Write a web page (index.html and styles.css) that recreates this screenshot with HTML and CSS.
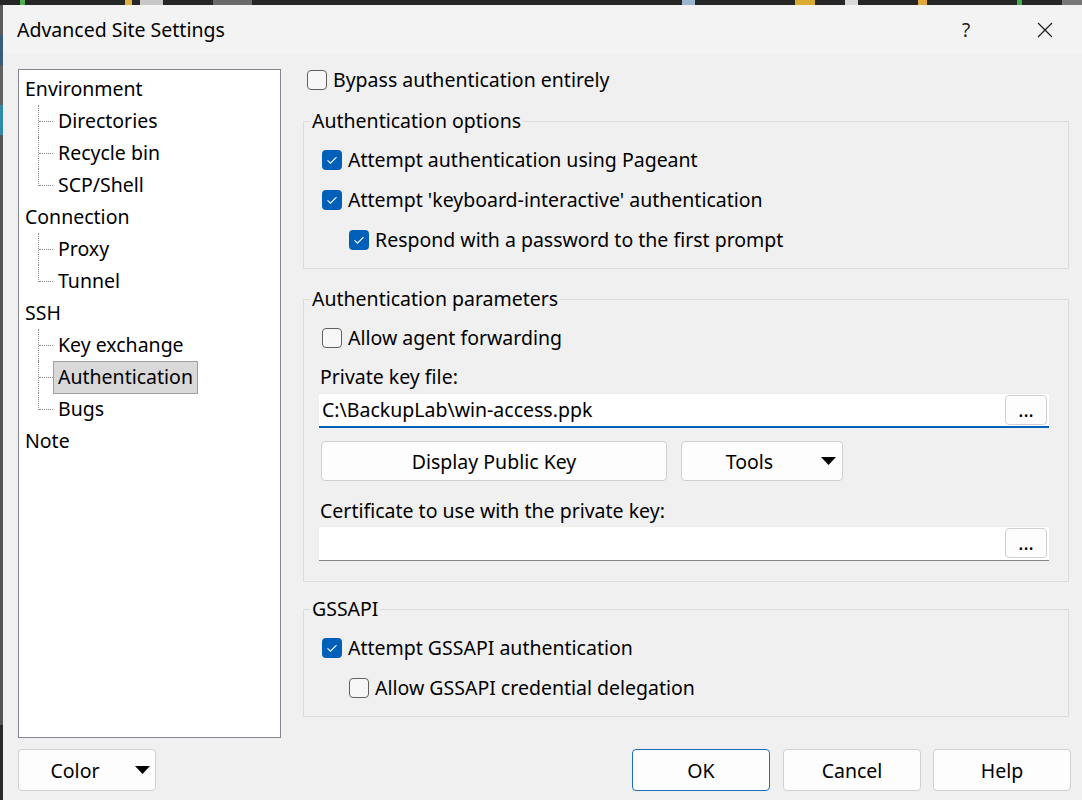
FILE: index.html
```html
<!DOCTYPE html>
<html lang="en">
<head>
<meta charset="utf-8">
<title>Advanced Site Settings</title>
<link rel="stylesheet" href="styles.css">
</head>
<body>
<div class="screen">
  <div class="topstrip">
    <span class="ts ts-g1"></span><span class="ts ts-y1"></span><span class="ts ts-w1"></span><span class="ts ts-gr1"></span>
    <span class="ts ts-b1"></span><span class="ts ts-y2"></span><span class="ts ts-w2"></span><span class="ts ts-y3"></span><span class="ts ts-g2"></span><span class="ts ts-gr2"></span>
  </div>
  <div class="row">
    <div class="leftstrip"></div>
    <div class="dialog">
      <div class="titlebar">
        <span class="title">Advanced Site Settings</span>
        <span class="help">?</span>
        <span class="close"><svg width="16" height="16" viewBox="0 0 16 16"><path d="M1 1 L15 15 M15 1 L1 15" stroke="#1b1b1b" stroke-width="1.2" fill="none"/></svg></span>
      </div>
      <div class="body">
        <div class="main">
          <div class="tree">
            <div class="node">Environment</div>
            <div class="kids">
              <div class="kid"><span>Directories</span></div>
              <div class="kid"><span>Recycle bin</span></div>
              <div class="kid"><span>SCP/Shell</span></div>
            </div>
            <div class="node">Connection</div>
            <div class="kids">
              <div class="kid"><span>Proxy</span></div>
              <div class="kid"><span>Tunnel</span></div>
            </div>
            <div class="node">SSH</div>
            <div class="kids">
              <div class="kid"><span>Key exchange</span></div>
              <div class="kid"><span class="sel">Authentication</span></div>
              <div class="kid"><span>Bugs</span></div>
            </div>
            <div class="node">Note</div>
          </div>

          <div class="pane">
            <label class="cb bypass"><span class="box off"></span>Bypass authentication entirely</label>

            <fieldset class="grp g1">
              <legend>Authentication options</legend>
              <label class="cb"><svg class="box" width="20" height="20" viewBox="0 0 20 20"><rect width="20" height="20" rx="4" fill="#005fb8"/><path d="M5.5 10.3 L8.5 13.2 L14.5 7.2" fill="none" stroke="#fff" stroke-width="1.1"/></svg>Attempt authentication using Pageant</label>
              <label class="cb"><svg class="box" width="20" height="20" viewBox="0 0 20 20"><rect width="20" height="20" rx="4" fill="#005fb8"/><path d="M5.5 10.3 L8.5 13.2 L14.5 7.2" fill="none" stroke="#fff" stroke-width="1.1"/></svg>Attempt 'keyboard-interactive' authentication</label>
              <label class="cb sub"><svg class="box" width="20" height="20" viewBox="0 0 20 20"><rect width="20" height="20" rx="4" fill="#005fb8"/><path d="M5.5 10.3 L8.5 13.2 L14.5 7.2" fill="none" stroke="#fff" stroke-width="1.1"/></svg>Respond with a password to the first prompt</label>
            </fieldset>

            <fieldset class="grp g2">
              <legend>Authentication parameters</legend>
              <label class="cb"><span class="box off"></span>Allow agent forwarding</label>
              <div class="lbl">Private key file:</div>
              <div class="field focus"><span class="val">C:\BackupLab\win-access.ppk</span><span class="btn dots">...</span></div>
              <div class="btnrow">
                <button class="btn pubkey">Display Public Key</button>
                <button class="btn dd tools"><span class="dd-label">Tools</span><svg width="15" height="8" viewBox="0 0 15 8"><path d="M0 0 H15 L7.5 8 Z" fill="#000"/></svg></button>
              </div>
              <div class="lbl lbl2">Certificate to use with the private key:</div>
              <div class="field"><span class="val"></span><span class="btn dots">...</span></div>
            </fieldset>

            <fieldset class="grp g3">
              <legend>GSSAPI</legend>
              <label class="cb"><svg class="box" width="20" height="20" viewBox="0 0 20 20"><rect width="20" height="20" rx="4" fill="#005fb8"/><path d="M5.5 10.3 L8.5 13.2 L14.5 7.2" fill="none" stroke="#fff" stroke-width="1.1"/></svg>Attempt GSSAPI authentication</label>
              <label class="cb sub"><span class="box off"></span>Allow GSSAPI credential delegation</label>
            </fieldset>
          </div>
        </div>

        <div class="footer">
          <button class="btn dd color"><span class="dd-label">Color</span><svg width="15" height="8" viewBox="0 0 15 8"><path d="M0 0 H15 L7.5 8 Z" fill="#000"/></svg></button>
          <div class="actions">
            <button class="btn fbtn ok">OK</button>
            <button class="btn fbtn cancel">Cancel</button>
            <button class="btn fbtn">Help</button>
          </div>
        </div>
      </div>
    </div>
  </div>
</div>
</body>
</html>
```

FILE: styles.css
```css
* { box-sizing: border-box; }

html, body {
  margin: 0;
  padding: 0;
}

body {
  width: 1082px;
  height: 800px;
  overflow: hidden;
  background: #1e1e1e;
  font-family: "Noto Sans", "Open Sans", sans-serif;
  font-size: 19.5px;
  color: #000;
}

.screen {
  display: flex;
  flex-direction: column;
}

.topstrip {
  height: 5px;
  display: flex;
  background: #262626;
}
.ts { height: 5px; display: block; }
.ts-g1 { width: 8px; margin-left: 20px; background: #4caf50; }
.ts-y1 { width: 10px; margin-left: 100px; background: #e0b040; }
.ts-w1 { width: 36px; margin-left: 8px; background: #c8c8c8; }
.ts-gr1 { width: 60px; margin-left: 50px; background: #6a6a6a; }
.ts-b1 { width: 20px; margin-left: 430px; background: #9bb4d0; }
.ts-y2 { width: 30px; margin-left: 100px; background: #d9a930; }
.ts-w2 { width: 20px; margin-left: 30px; background: #d8d8d8; }
.ts-y3 { width: 14px; margin-left: 60px; background: #e4a83a; }
.ts-g2 { width: 8px; margin-left: 90px; background: #3fae49; }
.ts-gr2 { width: 30px; margin-left: 40px; background: #777; }

.row {
  display: flex;
}

.leftstrip {
  width: 3px;
  height: 795px;
  background: linear-gradient(#5a5a5a 0 30px, #3a5e7a 30px 60px, #606060 60px 100px, #2f8aa8 100px 130px, #555 130px 720px, #2a2a2a 720px);
}

.dialog {
  width: 1079px;
  height: 795px;
  background: #f0f0f0;
  display: flex;
  flex-direction: column;
}

/* ---------- title bar ---------- */
.titlebar {
  height: 49px;
  flex: none;
  background: #f3f3f3;
  display: flex;
  align-items: center;
  padding: 0 14px;
}
.title {
  font-size: 19.5px;
  color: #000;
}
.help {
  margin-left: auto;
  width: 46px;
  text-align: center;
  font-size: 19px;
  color: #1b1b1b;
  margin-right: 33px;
}
.close {
  width: 46px;
  display: flex;
  justify-content: center;
  align-items: center;
}

/* ---------- body ---------- */
.body {
  padding: 15px 0 0 15px;
  display: flex;
  flex-direction: column;
}

.main {
  display: flex;
  gap: 22px;
  height: 669px;
}

/* ---------- tree ---------- */
.tree {
  width: 263px;
  height: 669px;
  background: #fff;
  border: 1px solid #828790;
  padding-top: 3px;
}
.node {
  height: 32px;
  line-height: 32px;
  padding-left: 6px;
}
.kid {
  position: relative;
  height: 32px;
  display: flex;
  align-items: center;
  padding-left: 34px;
}
.kid span {
  padding: 0 4px 1px;
  border: 1px solid transparent;
  line-height: 30px;
}
.kid span.sel {
  background: #d9d9d9;
  border-color: #a0a0a0;
}
.kid::before {
  content: "";
  position: absolute;
  left: 20px;
  width: 14px;
  top: 16px;
  border-top: 1px dotted #8c8c8c;
}
.kid::after {
  content: "";
  position: absolute;
  left: 19px;
  top: 0;
  bottom: 0;
  border-left: 1px dotted #8c8c8c;
}
.kid:last-child::after {
  bottom: 15px;
}

/* ---------- right pane ---------- */
.pane {
  width: 766px;
  display: flex;
  flex-direction: column;
}

.cb {
  display: flex;
  align-items: center;
  height: 40px;
  line-height: 26px;
  white-space: nowrap;
}
.cb .box {
  width: 20px;
  height: 20px;
  flex: none;
  margin-right: 6px;
  display: block;
}
.box.off {
  border: 1px solid #616161;
  border-radius: 4px;
  background: #f7f7f7;
}
.cb.sub {
  margin-left: 27px;
}
.cb.bypass {
  height: 22px;
  margin-left: 4px;
}

.grp {
  margin: 0;
  border: 1px solid #dcdcdc;
  padding: 6px 18px 8px 18px;
  min-width: 0;
}
.grp legend {
  padding: 0 2px;
  margin-left: -12px;
  line-height: 26px;
}
.g1 { margin-top: 17px; }
.g2 { margin-top: 17px; padding-bottom: 20px; }
.g3 { margin-top: 14px; }

.lbl {
  line-height: 26px;
  padding-top: 6px;
  padding-bottom: 3px;
  margin-left: -2px;
}
.lbl2 {
  padding: 0;
  margin-top: 17px;
  margin-bottom: 2px;
}

.field {
  height: 35px;
  width: 730px;
  margin-left: -3px;
  background: #fff;
  border-top: 1px solid #ececec;
  border-bottom: 1px solid #868686;
  display: flex;
  align-items: center;
  padding: 0 2px 0 3px;
}
.field.focus {
  border-bottom: 2px solid #005fb8;
}
.val {
  flex: 1;
  line-height: 26px;
  white-space: nowrap;
}

.btn {
  font: inherit;
  color: #000;
  background: #fdfdfd;
  border: 1px solid #d0d0d0;
  border-radius: 4px;
  padding: 0;
  margin: 0;
}
.dots {
  width: 42px;
  height: 30px;
  align-self: flex-start;
  margin-top: 1px;
  display: flex;
  justify-content: center;
  align-items: center;
  line-height: 26px;
}

.btnrow {
  display: flex;
  gap: 14px;
  margin-top: 13px;
  margin-left: -1px;
}
.pubkey {
  width: 346px;
  height: 40px;
}
.dd {
  display: flex;
  align-items: center;
  padding-right: 6px;
}
.dd svg {
  flex: none;
  margin-left: 4px;
  display: block;
}
.dd-label {
  flex: 1;
  text-align: center;
}
.tools {
  width: 162px;
  height: 40px;
}

/* ---------- footer ---------- */
.footer {
  display: flex;
  justify-content: space-between;
  width: 1053px;
  margin-top: 11px;
}
.color {
  width: 138px;
  height: 42px;
  padding-right: 5px;
}
.actions {
  display: flex;
  gap: 12px;
}
.fbtn {
  width: 138px;
  height: 42px;
}
.ok {
  border-color: #1a6fc0;
}
.cancel {
  margin-left: 1px;
}
```
